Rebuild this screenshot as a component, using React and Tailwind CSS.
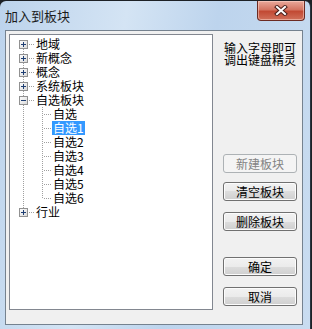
import React from 'react'

const rows = [
    { label: '地域', kind: 'root', sign: '+', first: true },
    { label: '新概念', kind: 'root', sign: '+' },
    { label: '概念', kind: 'root', sign: '+' },
    { label: '系统板块', kind: 'root', sign: '+' },
    { label: '自选板块', kind: 'root', sign: '-' },
    { label: '自选', kind: 'child' },
    { label: '自选1', kind: 'child', selected: true },
    { label: '自选2', kind: 'child' },
    { label: '自选3', kind: 'child' },
    { label: '自选4', kind: 'child' },
    { label: '自选5', kind: 'child' },
    { label: '自选6', kind: 'child', last: true },
    { label: '行业', kind: 'root', sign: '+', lastRoot: true },
]

const dot = { stroke: '#a0a0a0', strokeWidth: 1, strokeDasharray: '1 1' }

const RootGutter = ({ row }) => (
    <svg width="25" height="14" className="shrink-0">
        <defs>
            <linearGradient id="bx" x1="0" y1="0" x2="1" y2="1">
                <stop offset="0" stopColor="#ffffff" />
                <stop offset="1" stopColor="#d8d8d8" />
            </linearGradient>
        </defs>
        {!row.first && <line x1="13.5" y1="0" x2="13.5" y2="3" style={dot} />}
        {!row.lastRoot && <line x1="13.5" y1="12" x2="13.5" y2="14" style={dot} />}
        <rect x="9.5" y="3.5" width="8" height="8" fill="url(#bx)" stroke="#919191" />
        <line x1="11" y1="7.5" x2="16" y2="7.5" stroke="#1f3f73" />
        {row.sign === '+' && <line x1="13.5" y1="5" x2="13.5" y2="10" stroke="#1f3f73" />}
        <line x1="19" y1="7.5" x2="25" y2="7.5" style={dot} />
    </svg>
)

const ChildGutter = ({ row }) => (
    <svg width="42" height="14" className="shrink-0">
        <line x1="13.5" y1="0" x2="13.5" y2="14" style={dot} />
        <line x1="32.5" y1="0" x2="32.5" y2={row.last ? 8 : 14} style={dot} />
        <line x1="34" y1="7.5" x2="42" y2="7.5" style={dot} />
    </svg>
)

const Btn = ({ children, disabled }) => (
    <div
        className={
            disabled
                ? 'h-[19px] w-[74px] flex items-center justify-center rounded-[3px] border border-[#adb2b5] bg-[#f4f4f4] text-[#838383] text-[12px] leading-[12px]'
                : 'h-[19px] w-[74px] flex items-center justify-center rounded-[3px] border border-[#707070] bg-[linear-gradient(#f2f2f2_0%,#ebebeb_50%,#dddddd_50%,#cfcfcf_100%)] shadow-[inset_0_0_0_1px_#fcfcfc] text-black text-[12px] leading-[12px]'
        }
    >
        {children}
    </div>
)

const App = () => {
    return (
        <div className="w-[312px] h-[329px] bg-[#1d2126] pt-[1px] font-['Noto_Sans_CJK_SC',sans-serif] overflow-hidden">
            <div className="w-[311px] h-[328px] flex flex-col rounded-t-[6px] border-r border-[#2a3440] bg-[linear-gradient(100deg,#bcd3ec_0%,#d4e4f4_35%,#bdd4ed_60%,#c9dcf0_100%)]">
                {/* title bar */}
                <div className="h-[29px] flex justify-between shrink-0">
                    <div className="pl-[5px] pt-[8px] text-[13px] leading-[14px] text-[#1b1b1b]">加入到板块</div>
                    <div className="mr-[5px] w-[48px] h-[20px] flex items-center justify-center rounded-b-[4px] border border-t-0 border-[#6b2a22] bg-[linear-gradient(#e9a99b_0%,#d47562_45%,#c24a34_55%,#d0705a_100%)] shadow-[inset_0_0_0_1px_rgba(255,220,210,0.5)]">
                        <svg width="14" height="11">
                            <path d="M3 2 L11 9 M11 2 L3 9" stroke="#4a1f1a" strokeWidth="4" strokeLinecap="square" />
                            <path d="M3 2 L11 9 M11 2 L3 9" stroke="#ffffff" strokeWidth="2" strokeLinecap="square" />
                        </svg>
                    </div>
                </div>

                {/* client area */}
                <div className="ml-[5px] w-[298px] h-[295px] border border-[#75828f] bg-[#f0f0f0] flex pl-[3px] pt-[3px]">
                    <div className="w-[204px] h-[276px] border border-[#828790] bg-white pt-[2px] text-[12px] text-black">
                        {rows.map((row, i) => (
                            <div key={i} className="h-[14px] flex items-center">
                                {row.kind === 'root' ? <RootGutter row={row} /> : <ChildGutter row={row} />}
                                <span
                                    className={
                                        row.selected
                                            ? 'h-[14px] px-[1px] leading-[14px] bg-[#3399ff] text-white'
                                            : 'h-[14px] px-[1px] leading-[14px]'
                                    }
                                >
                                    {row.label}
                                </span>
                            </div>
                        ))}
                    </div>

                    <div className="ml-[10px] w-[74px] flex flex-col">
                        <div className="mt-[8px] pl-[1px] text-[12px] leading-[12px] text-black">
                            <p>输入字母即可</p>
                            <p>调出键盘精灵</p>
                        </div>
                        <div className="mt-[88px]">
                            <Btn disabled>新建板块</Btn>
                        </div>
                        <div className="mt-[9px]">
                            <Btn>清空板块</Btn>
                        </div>
                        <div className="mt-[11px]">
                            <Btn>删除板块</Btn>
                        </div>
                        <div className="mt-[26px]">
                            <Btn>确定</Btn>
                        </div>
                        <div className="mt-[11px]">
                            <Btn>取消</Btn>
                        </div>
                    </div>
                </div>
            </div>
        </div>
    )
}

export default App
